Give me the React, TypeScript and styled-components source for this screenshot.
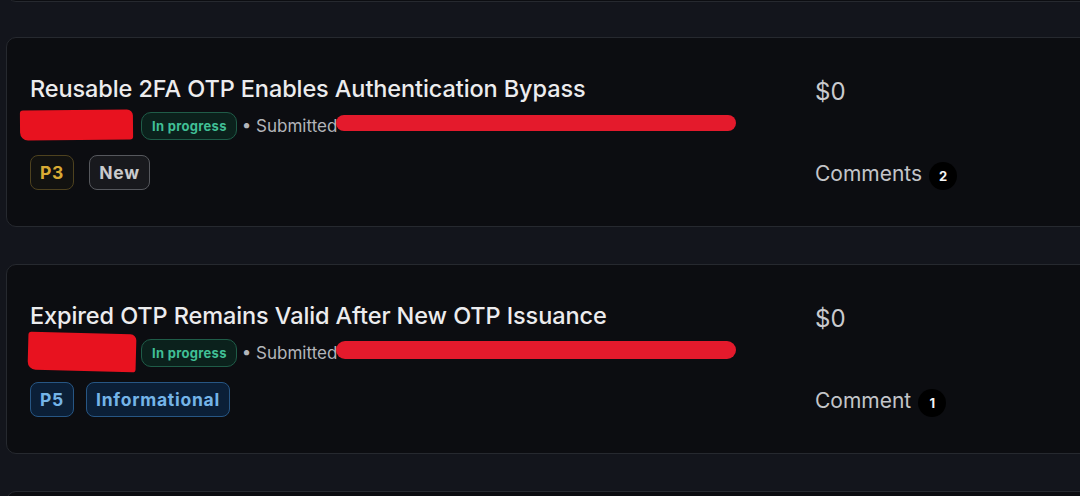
import React from "react";
import styled, { createGlobalStyle } from "styled-components";

const Global = createGlobalStyle`
  html, body { margin: 0; padding: 0; background: #13151c; overflow: hidden; }
  body { font-family: Inter, "Noto Sans", "Liberation Sans", sans-serif; }
`;

const Page = styled.div`
  width: 1080px;
  height: 496px;
  overflow: hidden;
  padding-left: 6px;
  box-sizing: border-box;
  display: flex;
  flex-direction: column;
  gap: 37px;
`;

const Card = styled.div<{ $stub?: boolean }>`
  flex: none;
  width: 1100px;
  box-sizing: border-box;
  height: ${(p) => (p.$stub ? "60px" : "190px")};
  margin-top: ${(p) => (p.$stub ? "-58px" : "0")};
  margin-bottom: ${(p) => (p.$stub ? "-2px" : "0")};
  background: #0c0d11;
  border: 1px solid #26292f;
  border-radius: 10px;
  padding: 37px 0 0 23px;
  display: grid;
  grid-template-columns: 785px 1fr;
`;

const Left = styled.div`
  display: flex;
  flex-direction: column;
`;

const Title = styled.div`
  font-size: 23.5px;
  font-weight: 500;
  line-height: 28px;
  color: #ececee;
  letter-spacing: -0.1px;
`;

const MetaRow = styled.div`
  margin-top: 9px;
  height: 28px;
  display: flex;
  align-items: center;
`;

const Name = styled.span`
  position: relative;
  width: 102px;
  height: 28px;
  margin-left: 1px;
  margin-right: 8px;
  flex: none;
`;

const Redact = styled.span<{ $x: number; $y: number; $w: number; $h: number; $tilt: number }>`
  position: absolute;
  left: ${(p) => p.$x}px;
  top: ${(p) => p.$y}px;
  width: ${(p) => p.$w}px;
  height: ${(p) => p.$h}px;
  background: #e8121f;
  border-radius: 3px 6px 3px 8px;
  transform: rotate(${(p) => p.$tilt}deg);
`;

const Status = styled.span`
  height: 28px;
  box-sizing: border-box;
  padding: 0 9px 0 10px;
  display: inline-flex;
  align-items: center;
  border: 1px solid #1f5c48;
  background: #0b211c;
  border-radius: 10px;
  color: #40bf95;
  font-size: 13px;
  font-weight: 700;
  letter-spacing: 0.3px;
`;

const Submitted = styled.span`
  margin-left: 5px;
  font-size: 17px;
  color: #b3b5ba;
  display: inline-flex;
  align-items: center;
`;

const Stroke = styled.span<{ $top: number; $h: number }>`
  display: inline-block;
  width: 400px;
  height: ${(p) => p.$h}px;
  margin-left: -1px;
  margin-top: ${(p) => p.$top}px;
  background: #e41a2c;
  border-radius: 9px;
`;

const Tags = styled.div<{ $gap: number }>`
  margin-top: 15px;
  display: flex;
  gap: ${(p) => p.$gap}px;
`;

const Tag = styled.span<{ $tone: "gold" | "grey" | "blue" }>`
  height: 35px;
  box-sizing: border-box;
  padding: 0 9px;
  display: inline-flex;
  align-items: center;
  border-radius: 8px;
  font-size: 17.5px;
  font-weight: 700;
  letter-spacing: 0.75px;
  border: 1px solid
    ${(p) => (p.$tone === "gold" ? "#4e421f" : p.$tone === "grey" ? "#56585d" : "#275684")};
  background: ${(p) => (p.$tone === "gold" ? "#121210" : p.$tone === "grey" ? "#18191d" : "#0b1f37")};
  color: ${(p) => (p.$tone === "gold" ? "#d8aa34" : p.$tone === "grey" ? "#c9cacc" : "#74b4e8")};
`;

const Right = styled.div`
  display: flex;
  flex-direction: column;
  padding-top: 2px;
`;

const Amount = styled.div`
  font-size: 24px;
  line-height: 30px;
  color: #c9cace;
`;

const CommentRow = styled.div`
  margin-top: 51px;
  display: flex;
  align-items: center;
  gap: 7px;
  font-size: 21px;
  line-height: 28px;
  color: #c3c5c9;
`;

const Count = styled.span`
  width: 28px;
  height: 28px;
  border-radius: 50%;
  background: #000;
  color: #f4f4f4;
  font-size: 13px;
  font-weight: 700;
  display: inline-flex;
  align-items: center;
  justify-content: center;
  margin-top: 4px;
`;

type Report = {
  title: string;
  priority: string;
  state: string;
  stateTone: "grey" | "blue";
  priorityTone: "gold" | "blue";
  comments: string;
  count: number;
  tagGap: number;
  redact: { x: number; y: number; w: number; h: number; tilt: number };
  stroke: { top: number; h: number };
};

const reports: Report[] = [
  {
    title: "Reusable 2FA OTP Enables Authentication Bypass",
    priority: "P3",
    priorityTone: "gold",
    state: "New",
    stateTone: "grey",
    comments: "Comments",
    count: 2,
    tagGap: 15,
    redact: { x: -11, y: -2, w: 113, h: 30, tilt: -0.5 },
    stroke: { top: -6, h: 16 },
  },
  {
    title: "Expired OTP Remains Valid After New OTP Issuance",
    priority: "P5",
    priorityTone: "blue",
    state: "Informational",
    stateTone: "blue",
    comments: "Comment",
    count: 1,
    tagGap: 12,
    redact: { x: -3, y: -6, w: 108, h: 38, tilt: 1.5 },
    stroke: { top: -6, h: 18 },
  },
];

export default function App() {
  return (
    <>
      <Global />
      <Page>
        <Card $stub />
        {reports.map((r) => (
          <Card key={r.title}>
            <Left>
              <Title>{r.title}</Title>
              <MetaRow>
                <Name>
                  <Redact
                    $x={r.redact.x}
                    $y={r.redact.y}
                    $w={r.redact.w}
                    $h={r.redact.h}
                    $tilt={r.redact.tilt}
                  />
                </Name>
                <Status>In progress</Status>
                <Submitted>
                  • Submitted
                  <Stroke $top={r.stroke.top} $h={r.stroke.h} />
                </Submitted>
              </MetaRow>
              <Tags $gap={r.tagGap}>
                <Tag $tone={r.priorityTone}>{r.priority}</Tag>
                <Tag $tone={r.stateTone}>{r.state}</Tag>
              </Tags>
            </Left>
            <Right>
              <Amount>$0</Amount>
              <CommentRow>
                {r.comments}
                <Count>{r.count}</Count>
              </CommentRow>
            </Right>
          </Card>
        ))}
        <Card />
      </Page>
    </>
  );
}
